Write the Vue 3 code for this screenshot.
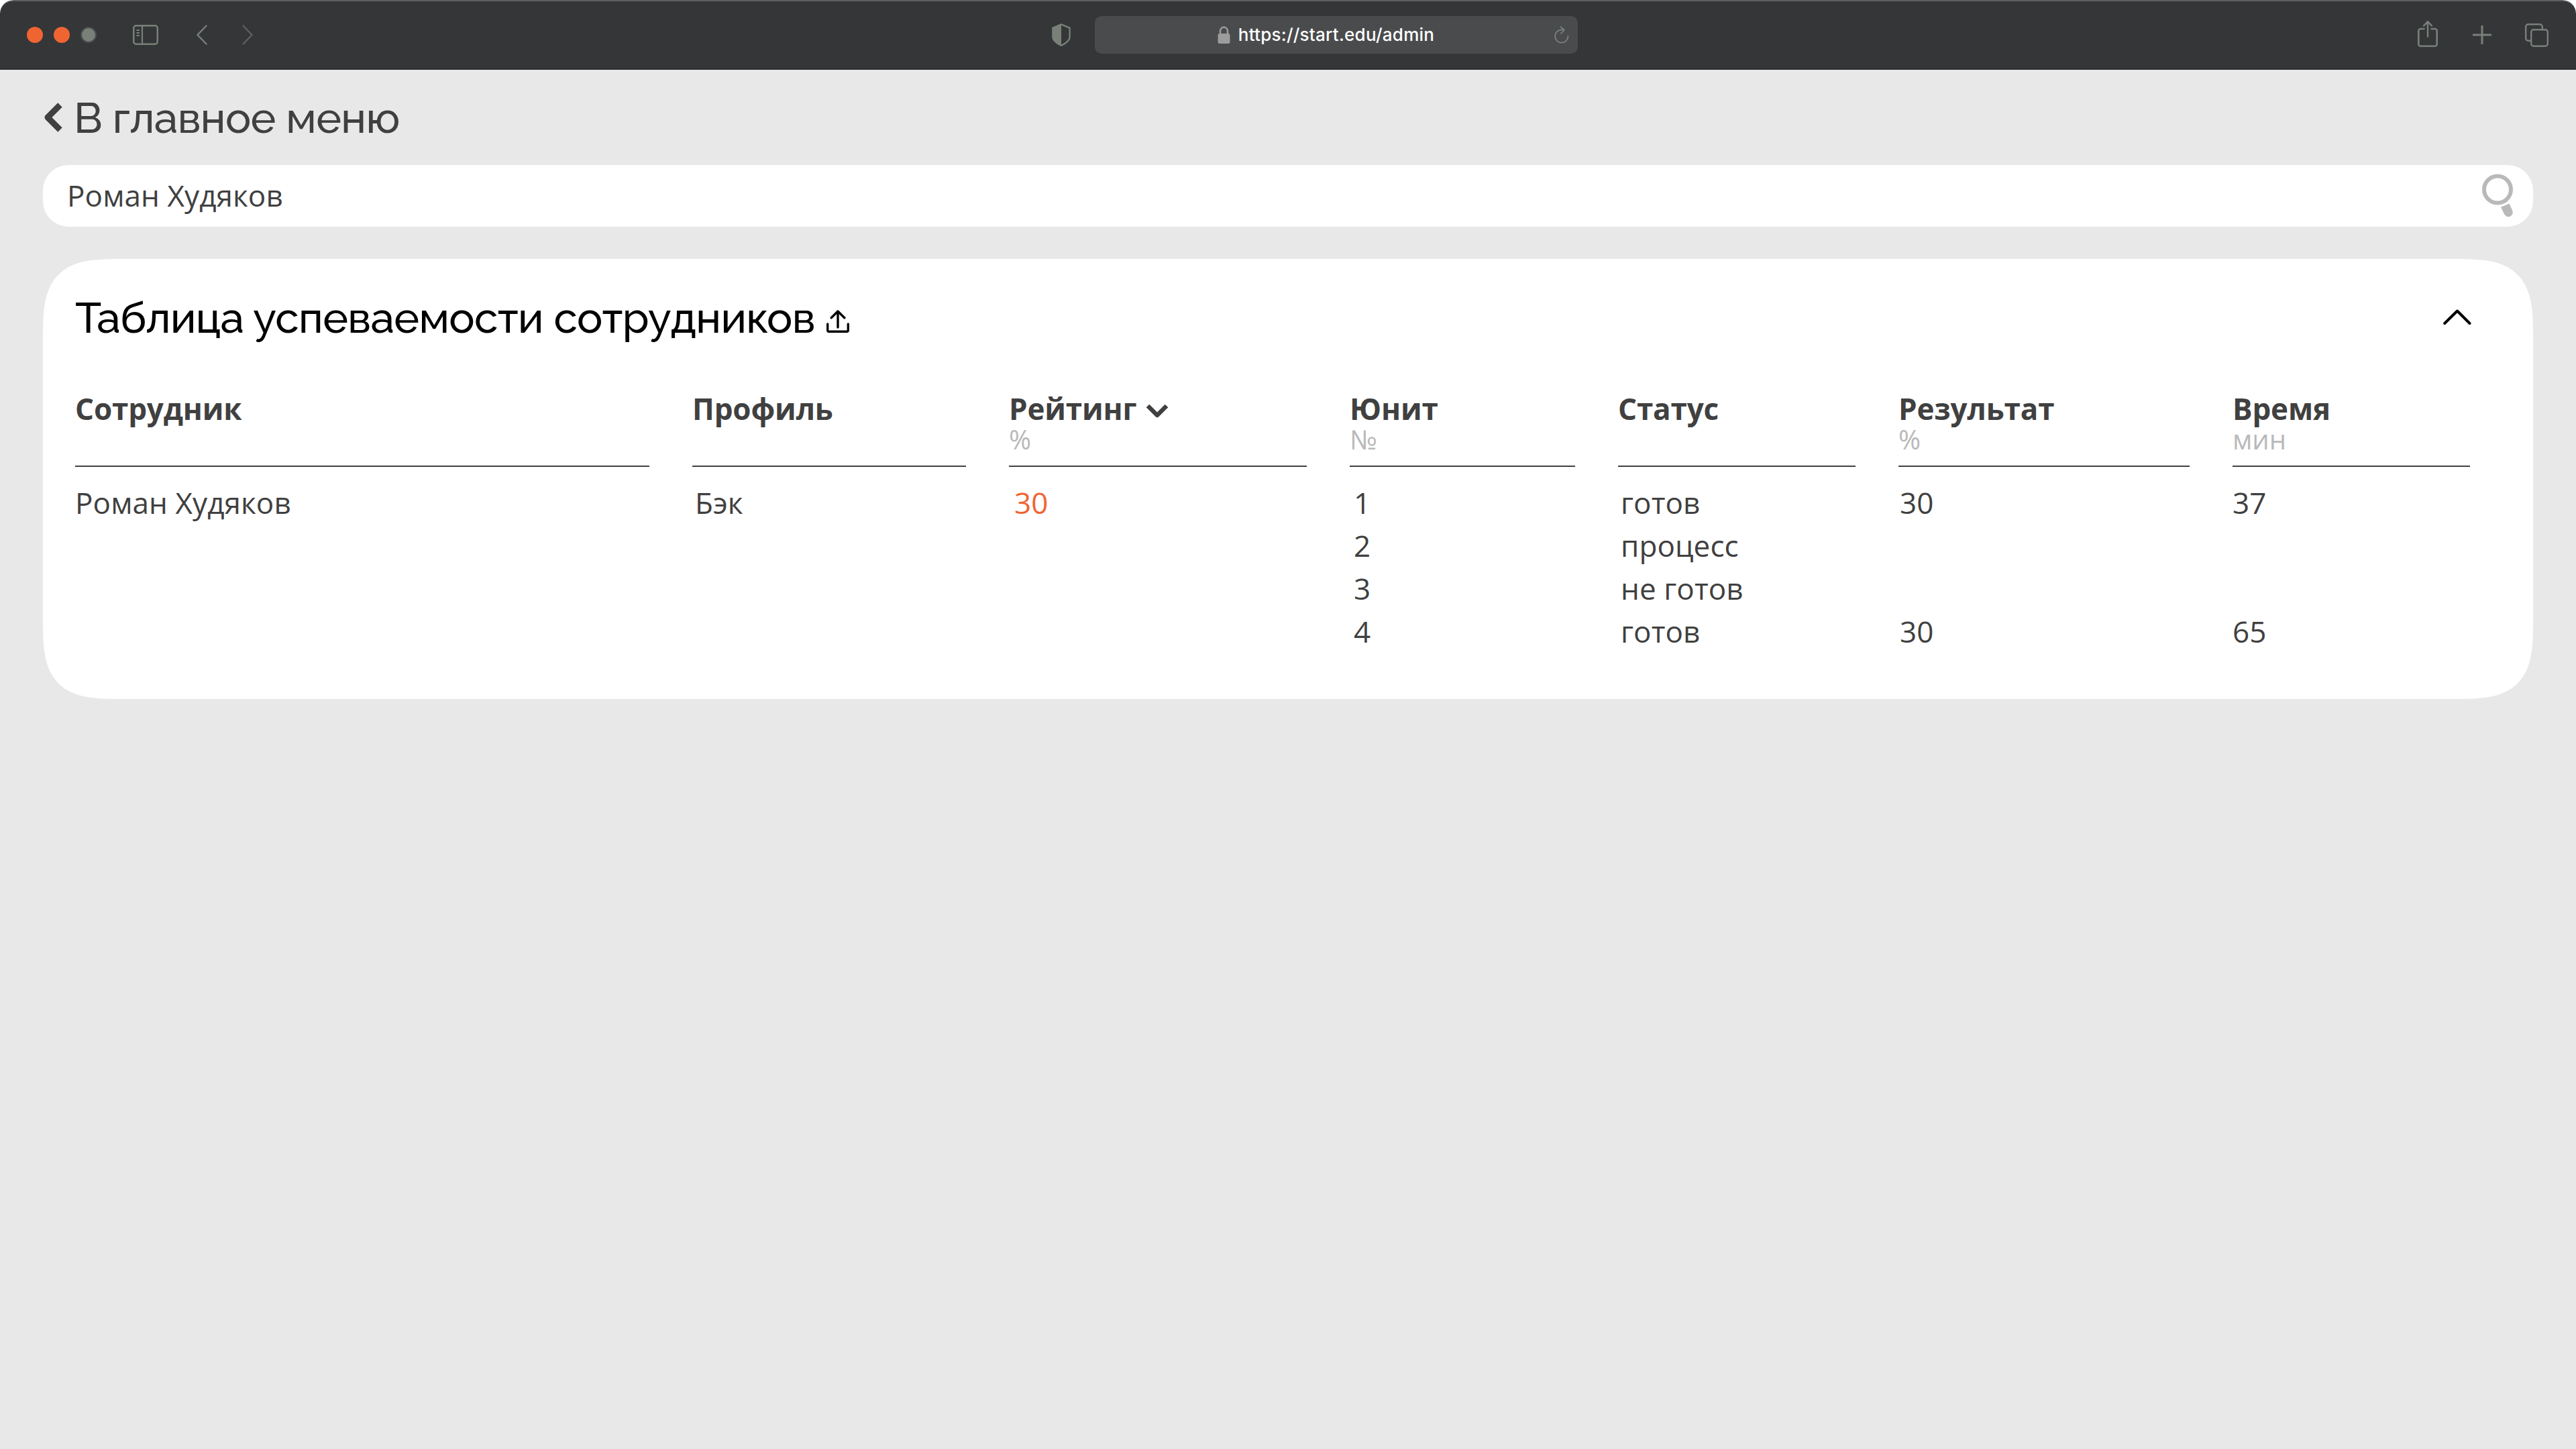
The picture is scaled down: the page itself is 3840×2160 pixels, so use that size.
<script setup>
import { ref, computed } from "vue";

const query = ref("Роман Худяков");
const expanded = ref(true);

const columns = [
  { key: "name", title: "Сотрудник", unit: "" },
  { key: "profile", title: "Профиль", unit: "" },
  { key: "rating", title: "Рейтинг", unit: "%", sortable: true },
  { key: "unit", title: "Юнит", unit: "№" },
  { key: "status", title: "Статус", unit: "" },
  { key: "result", title: "Результат", unit: "%" },
  { key: "time", title: "Время", unit: "мин" },
];

const employees = ref([
  {
    name: "Роман Худяков",
    profile: "Бэк",
    rating: 30,
    units: [
      { unit: 1, status: "готов", result: 30, time: 37 },
      { unit: 2, status: "процесс" },
      { unit: 3, status: "не готов" },
      { unit: 4, status: "готов", result: 30, time: 65 },
    ],
  },
]);

const rows = computed(() =>
  employees.value
    .filter((e) => e.name.toLowerCase().includes(query.value.trim().toLowerCase()))
    .flatMap((e) =>
      e.units.map((u, i) =>
        i === 0 ? { name: e.name, profile: e.profile, rating: e.rating, ...u } : u
      )
    )
);
</script>

<template>
  <div class="window">
    <!-- Browser bar -->
    <header class="browser-bar">
      <div class="bar-left">
        <div class="dots">
          <span class="dot"></span>
          <span class="dot"></span>
          <span class="dot dot-off"></span>
        </div>
        <svg class="icon-sidebar" width="38" height="30" viewBox="0 0 38 30" fill="none" stroke="currentColor">
          <rect x="1.25" y="1.25" width="35.5" height="27.5" rx="3.5" stroke-width="2.5" />
          <path d="M14 1v28" stroke-width="2.2" />
          <path d="M5.5 8h4.5M5.5 12h4.5M5.5 16h4.5" stroke-width="1.8" />
        </svg>
        <svg class="icon-prev" width="16" height="30" viewBox="0 0 16 30" fill="none" stroke="currentColor" stroke-width="2.4" stroke-linecap="round">
          <path d="M14.5 1.5L1.5 15l13 13.5" />
        </svg>
        <svg class="icon-next" width="16" height="30" viewBox="0 0 16 30" fill="none" stroke="currentColor" stroke-width="2.4" stroke-linecap="round">
          <path d="M1.5 1.5l13 13.5-13 13.5" />
        </svg>
      </div>

      <div class="bar-center">
        <svg width="28" height="34" viewBox="0 0 28 34">
          <path d="M14 1.4l12.6 5.2v13.6c0 5-4.6 8.8-12.6 12.6C6 29 1.4 25.2 1.4 20.2V6.6z" fill="none" stroke="currentColor" stroke-width="2.4" stroke-linejoin="round" />
          <path d="M14 1.4v31.4C6 29 1.4 25.2 1.4 20.2V6.6z" fill="currentColor" />
        </svg>
        <div class="address">
          <span class="address-side"></span>
          <div class="address-main">
            <svg width="19" height="26" viewBox="0 0 19 26">
              <rect x="0.5" y="11" width="18" height="15" rx="2.5" fill="#9c9c9c" />
              <path d="M4 12V7.5a5.5 6 0 0 1 11 0V12" fill="none" stroke="#9c9c9c" stroke-width="2.5" />
            </svg>
            <span class="address-text">https://start.edu/admin</span>
          </div>
          <svg class="icon-reload" width="22" height="26" viewBox="0 0 22 26" fill="none" stroke="currentColor" stroke-width="1.8" stroke-linecap="round">
            <path d="M20.5 15a9.7 9.7 0 1 1-9.7-9.7c1 0 1.7 0 2.7.3" />
            <path d="M9.5 1l5.3 4.8-5 5" />
          </svg>
        </div>
      </div>

      <div class="bar-right">
        <svg width="30" height="40" viewBox="0 0 30 40" fill="none" stroke="currentColor" stroke-width="2.6" stroke-linecap="round">
          <path d="M9.5 13H4.3a3 3 0 0 0-3 3v19.7a3 3 0 0 0 3 3h21.4a3 3 0 0 0 3-3V16a3 3 0 0 0-3-3h-5.2" />
          <path d="M15 24.5V2.5M9 8.3l6-6 6 6" stroke-width="2.4" />
        </svg>
        <svg class="icon-plus" width="28" height="28" viewBox="0 0 28 28" fill="none" stroke="currentColor" stroke-width="3">
          <path d="M14 0v28M0 14h28" />
        </svg>
        <svg width="35" height="35" viewBox="0 0 35 35" fill="none" stroke="currentColor" stroke-width="2.4">
          <rect x="9.2" y="9.2" width="24.6" height="24.6" rx="3.5" />
          <path d="M9 25.8H4.7a3.5 3.5 0 0 1-3.5-3.5V4.7a3.5 3.5 0 0 1 3.5-3.5h17.6a3.5 3.5 0 0 1 3.5 3.5V9" />
        </svg>
      </div>
    </header>

    <main class="page">
      <a class="back-link">
        <svg width="30" height="46" viewBox="0 0 30 46" fill="none" stroke="currentColor" stroke-width="9" stroke-linejoin="round">
          <path d="M25.5 4.5L7 23l18.5 18.5" />
        </svg>
        <span>В главное меню</span>
      </a>

      <label class="search">
        <input v-model="query" class="search-input" type="text" />
        <svg width="48" height="66" viewBox="0 0 48 66">
          <circle cx="23" cy="23.5" r="20" fill="none" stroke="#b9b9b9" stroke-width="6" />
          <path d="M28 49.8L40.5 44.5l4.6 10.2a6.6 6.6 0 0 1-12 5.6z" fill="#b9b9b9" />
        </svg>
      </label>

      <section class="card">
        <div class="card-head">
          <h1 class="card-title">Таблица успеваемости сотрудников</h1>
          <svg class="icon-upload" width="34" height="34" viewBox="0 0 34 34" fill="none" stroke="currentColor" stroke-width="3.4" stroke-linecap="round" stroke-linejoin="round">
            <path d="M17 26V2M7.2 11.7L17 2l9.8 9.7" />
            <path d="M1.7 21v9.3a2 2 0 0 0 2 2h26.6a2 2 0 0 0 2-2V21" />
          </svg>
          <button class="toggle" type="button" @click="expanded = !expanded">
            <svg width="42" height="24" viewBox="0 0 42 24" fill="none" stroke="#000" stroke-width="4" stroke-linecap="round" stroke-linejoin="round">
              <path d="M2.2 21L21 2.5 39.5 21" />
            </svg>
          </button>
        </div>

        <div v-if="expanded" class="table">
          <div class="row head">
            <div v-for="col in columns" :key="col.key" class="th">
              <div class="th-title">
                {{ col.title }}
                <svg v-if="col.sortable" width="34" height="22" viewBox="0 0 34 22" fill="none" stroke="currentColor" stroke-width="6.5" stroke-linejoin="round">
                  <path d="M3 3l14 14L31 3" />
                </svg>
              </div>
              <div class="th-unit">{{ col.unit }}</div>
            </div>
          </div>
          <div v-for="(row, i) in rows" :key="i" class="row">
            <div v-for="col in columns" :key="col.key" class="td" :class="col.key">
              {{ row[col.key] }}
            </div>
          </div>
        </div>
      </section>
    </main>
  </div>
</template>

<style>
body {
  margin: 0;
  background: #ffffff;
}
</style>

<style scoped>
.window {
  min-height: 100vh;
  display: flex;
  flex-direction: column;
  box-sizing: border-box;
  overflow: hidden;
  border-radius: 20px 20px 0 0;
  background: #e8e8e8;
  color: #404040;
  font-family: "Open Sans", "Noto Sans", sans-serif;
}

svg {
  display: block;
  flex-shrink: 0;
}

/* ======================== Browser bar ======================== */

.browser-bar {
  display: grid;
  grid-template-columns: 1fr auto 1fr;
  align-items: center;
  height: 104px;
  box-sizing: border-box;
  padding: 0 41px 0 40px;
  border-top: 2px solid #5d5e60;
  border-bottom: 2px solid #2f2d2f;
  border-radius: 20px 20px 0 0;
  background: #353638;
  color: #788078;
}

.bar-left {
  display: flex;
  align-items: center;
}

.dots {
  display: flex;
  gap: 16px;
}

.dot {
  width: 24px;
  height: 24px;
  border-radius: 50%;
  background: #f06432;
}

.dot-off {
  box-sizing: border-box;
  border: 2px solid #4c4d50;
  background: #788078;
}

.icon-sidebar {
  margin-left: 54px;
}

.icon-prev {
  margin-left: 57px;
}

.icon-next {
  margin-left: 52px;
  color: #5c605e;
}

.bar-center {
  display: flex;
  align-items: center;
  gap: 36px;
  margin-right: -80px;
}

.address {
  display: flex;
  align-items: center;
  justify-content: space-between;
  width: 720px;
  height: 56px;
  box-sizing: border-box;
  padding: 0 12px;
  border-radius: 10px;
  background: #4a4b4d;
}

.address-side {
  width: 22px;
}

.address-main {
  display: flex;
  align-items: center;
  gap: 12px;
  margin-right: 30px;
}

.address-text {
  font-family: Inter, sans-serif;
  font-size: 26px;
  line-height: 32px;
  font-weight: 500;
  letter-spacing: 0.25px;
  color: #ffffff;
}

.bar-right {
  display: flex;
  align-items: center;
  justify-content: flex-end;
  gap: 50px;
}

.bar-right svg:first-child {
  margin-bottom: 4px;
}

.icon-plus {
  margin-left: 2px;
}

/* ======================== Page ======================== */

.page {
  padding: 32px 64px 0;
}

.back-link {
  display: flex;
  align-items: center;
  gap: 16px;
  height: 80px;
  font-family: Raleway, Lato, "Open Sans", sans-serif;
  font-size: 64px;
  line-height: 80px;
  font-weight: 500;
  letter-spacing: -0.01em;
}

.back-link svg {
  margin-bottom: 2px;
}

.search {
  display: flex;
  align-items: center;
  height: 92px;
  box-sizing: border-box;
  margin-top: 30px;
  padding: 0 28px 0 36px;
  border-radius: 38px;
  background: #ffffff;
}

.search-input {
  flex: 1;
  margin-bottom: 2px;
  padding: 0;
  border: none;
  outline: none;
  background: none;
  color: inherit;
  font-family: inherit;
  font-size: 44px;
  line-height: 60px;
  letter-spacing: 0.1px;
}

/* ======================== Card ======================== */

.card {
  margin-top: 48px;
  padding: 48px 92px 69px 48px;
  border-radius: 80px;
  background: #ffffff;
}

@supports (corner-shape: squircle) {
  .card {
    border-radius: 120px;
    corner-shape: superellipse(1.68);
  }
}

.card-head {
  display: flex;
  align-items: center;
  height: 80px;
  color: #000000;
}

.card-title {
  margin: 0;
  font-family: Raleway, Lato, "Open Sans", sans-serif;
  font-size: 64px;
  line-height: 80px;
  font-weight: 500;
  letter-spacing: -0.01em;
}

.icon-upload {
  margin: 10px 0 0 17px;
}

.toggle {
  margin: 0 0 2px auto;
  padding: 0;
  border: none;
  background: none;
  cursor: pointer;
}

/* ======================== Table ======================== */

.table {
  margin-top: 70px;
}

.row {
  display: grid;
  grid-template-columns: 856px 408px 444px 336px 354px 434px 354px;
  column-gap: 64px;
}

.head {
  margin-bottom: 21px;
}

.th {
  border-bottom: 2px solid #404040;
  padding-bottom: 19px;
}

.th-title {
  display: flex;
  align-items: center;
  gap: 14px;
  height: 50px;
  font-size: 44px;
  line-height: 50px;
  font-weight: 700;
  letter-spacing: -0.15px;
}

.th-title svg {
  margin-top: 8px;
}

.th-unit {
  height: 40px;
  padding-top: 1px;
  font-size: 40px;
  line-height: 40px;
  font-weight: 400;
  color: #b9b9b9;
}

.td {
  height: 64px;
  font-size: 44px;
  line-height: 64px;
  letter-spacing: 0.1px;
  white-space: nowrap;
}

.td.profile,
.td.status {
  padding-left: 4px;
}

.td.rating {
  padding-left: 8px;
  color: #f06432;
}

.td.unit {
  padding-left: 6px;
}

.td.result {
  padding-left: 2px;
}
</style>
